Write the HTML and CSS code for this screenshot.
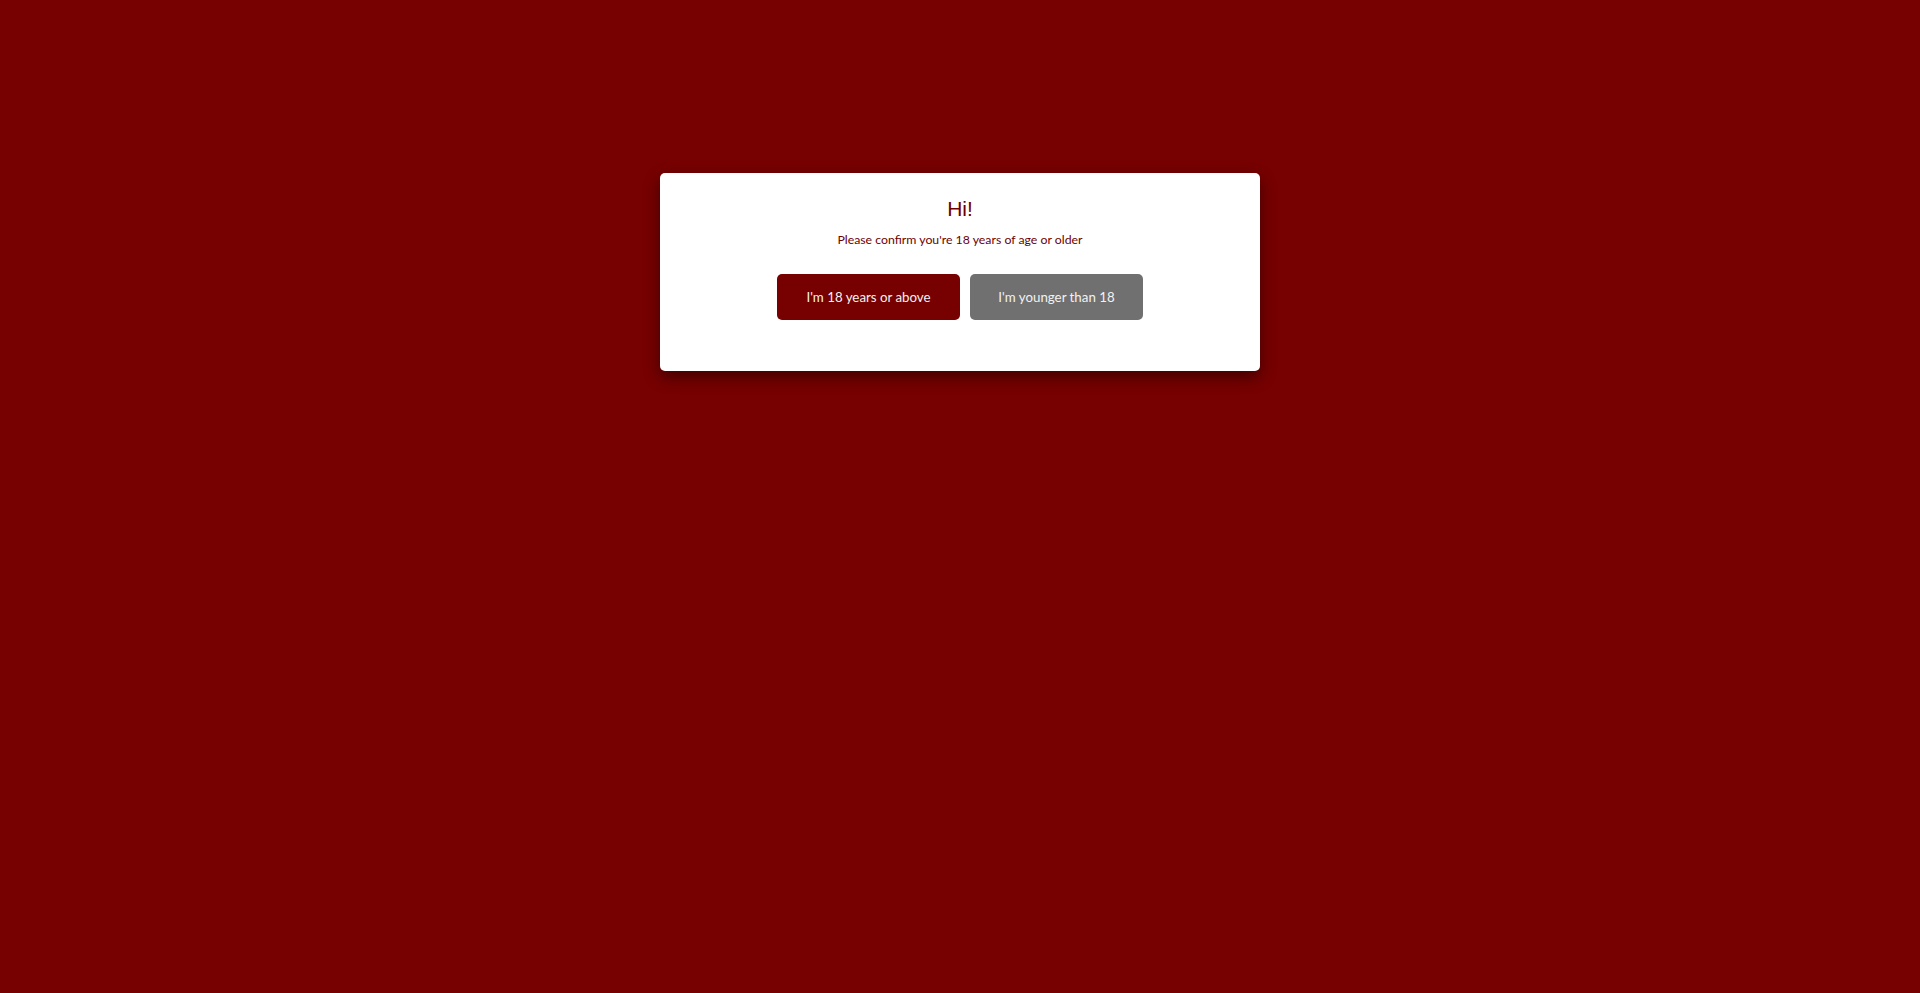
FILE: index.html
```html
<!DOCTYPE html>
<html lang="en">
<head>
<meta charset="utf-8">
<title>Age verification</title>
<link rel="stylesheet" href="styles.css">
</head>
<body>
<div class="page">
  <div class="modal">
    <h1 class="title">Hi!</h1>
    <p class="subtitle">Please confirm you're 18 years of age or older</p>
    <div class="actions">
      <button class="btn btn-yes">I'm 18 years or above</button>
      <button class="btn btn-no">I'm younger than 18</button>
    </div>
  </div>
</div>
</body>
</html>
```
FILE: styles.css
```css
html, body {
  margin: 0;
  height: 100%;
  background: #770000;
}
.page {
  display: flex;
  justify-content: center;
  align-items: flex-start;
  padding-top: 173px;
  box-sizing: border-box;
  height: 100%;
}
.modal {
  width: 600px;
  box-sizing: border-box;
  background: #ffffff;
  border-radius: 5px;
  box-shadow: 0 6px 16px rgba(0, 0, 0, 0.45);
  padding: 24px 20px 51px;
  text-align: center;
}
.title {
  margin: 0;
  font-family: "Liberation Sans", Arial, sans-serif;
  font-weight: 400;
  font-size: 21px;
  line-height: 24px;
  color: #6e0000;
}
.subtitle {
  margin: 11px 0 0;
  font-family: Lato, "Open Sans", sans-serif;
  font-size: 12.3px;
  line-height: 16px;
  color: #6e0000;
}
.actions {
  display: flex;
  justify-content: center;
  gap: 10px;
  margin-top: 26px;
}
.btn {
  height: 46px;
  border: 0;
  border-radius: 5px;
  font-family: Lato, "Open Sans", sans-serif;
  font-size: 13.3px;
  color: #f2f2f2;
  padding: 0;
  cursor: pointer;
}
.btn-yes {
  width: 183px;
  background: #770000;
}
.btn-no {
  width: 173px;
  background: #707070;
}
```
